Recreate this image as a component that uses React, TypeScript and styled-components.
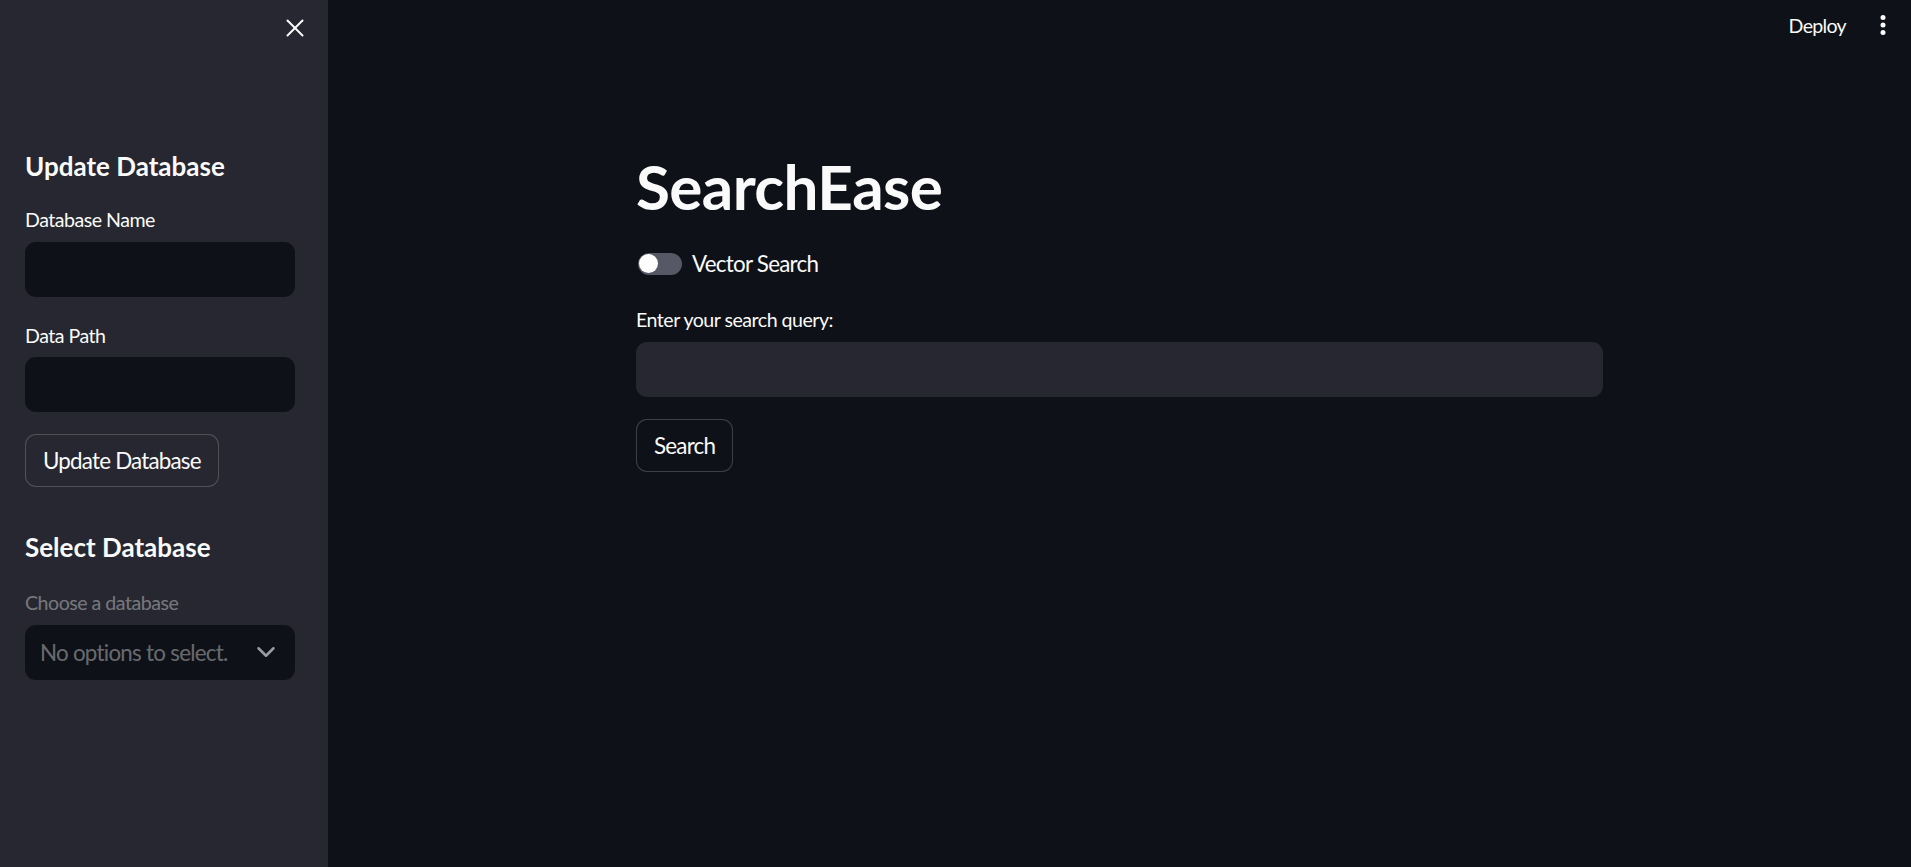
import React from 'react';
import styled, { createGlobalStyle } from 'styled-components';
import { X, ChevronDown } from 'lucide-react';

const GlobalStyle = createGlobalStyle`
  html, body {
    margin: 0;
    padding: 0;
    background: #0e1117;
    color: #fafafa;
    font-family: Lato, "Noto Sans", sans-serif;
  }
  * {
    box-sizing: border-box;
  }
`;

const Shell = styled.div`
  display: flex;
  flex-direction: row;
  width: 100%;
  height: 100vh;
  overflow: hidden;
`;

const Sidebar = styled.aside`
  width: 328px;
  flex-shrink: 0;
  height: 100%;
  background: #262730;
  display: flex;
  flex-direction: column;
  padding: 0 33px 0 25px;
`;

const SidebarTop = styled.div`
  height: 56px;
  display: flex;
  justify-content: flex-end;
  align-items: center;
  margin-right: -15px;
  color: #fafafa;
`;

const Heading = styled.h3<{ $top: number }>`
  margin: ${(p) => p.$top}px 0 0 0;
  font-size: 26px;
  line-height: 31px;
  font-weight: 700;
  color: #fafafa;
`;

const Label = styled.label<{ $top: number; $muted?: boolean }>`
  display: block;
  margin-top: ${(p) => p.$top}px;
  font-size: 19.6px;
  line-height: 23.5px;
  letter-spacing: -0.5px;
  color: ${(p) => (p.$muted ? 'rgba(250, 250, 250, 0.4)' : '#fafafa')};
`;

const Field = styled.div<{ $top: number; $bg: string }>`
  margin-top: ${(p) => p.$top}px;
  height: 55px;
  width: 100%;
  border-radius: 11px;
  background: ${(p) => p.$bg};
`;

const Button = styled.button<{ $top: number; $bg: string }>`
  margin-top: ${(p) => p.$top}px;
  align-self: flex-start;
  height: 53px;
  padding: 0 17px;
  border-radius: 11px;
  border: 1px solid rgba(250, 250, 250, 0.2);
  background: ${(p) => p.$bg};
  color: #fafafa;
  font-family: Lato, "Noto Sans", sans-serif;
  font-size: 22.4px;
  letter-spacing: -0.8px;
  cursor: pointer;
`;

const Select = styled.div`
  margin-top: 10px;
  height: 55px;
  width: 100%;
  border-radius: 11px;
  background: #0e1117;
  display: flex;
  align-items: center;
  justify-content: space-between;
  padding: 0 14px 0 15px;
  font-size: 22.4px;
  letter-spacing: -0.75px;
  color: rgba(250, 250, 250, 0.4);
  svg {
    color: rgba(250, 250, 250, 0.6);
  }
`;

const Main = styled.main`
  flex: 1;
  display: flex;
  flex-direction: column;
  height: 100%;
`;

const Header = styled.header`
  height: 50px;
  display: flex;
  justify-content: flex-end;
  align-items: center;
  gap: 32px;
  padding: 0 23px 0 0;
`;

const DeployText = styled.span`
  font-size: 19.6px;
  letter-spacing: -0.7px;
  color: #fafafa;
`;

const Content = styled.div`
  width: 967px;
  margin: 0 auto;
  display: flex;
  flex-direction: column;
`;

const Title = styled.h1`
  margin: 99px 0 0 0;
  font-size: 62px;
  line-height: 74px;
  font-weight: 700;
  letter-spacing: -0.6px;
  color: #fafafa;
`;

const ToggleRow = styled.div`
  margin-top: 27px;
  display: flex;
  align-items: center;
  gap: 10px;
  padding-left: 2px;
  font-size: 22.4px;
  letter-spacing: -0.75px;
`;

const Track = styled.div`
  width: 44px;
  height: 22px;
  border-radius: 11px;
  background: #565866;
  display: flex;
  align-items: center;
  padding-left: 1px;
`;

const Thumb = styled.div`
  width: 19px;
  height: 19px;
  border-radius: 50%;
  background: #ffffff;
`;

const Dots = () => (
  <svg width="10" height="24" viewBox="0 0 10 24" fill="#fafafa">
    <circle cx="5" cy="4.5" r="2.5" />
    <circle cx="5" cy="12" r="2.5" />
    <circle cx="5" cy="19.5" r="2.5" />
  </svg>
);

const App = () => (
  <>
    <GlobalStyle />
    <Shell>
      <Sidebar>
        <SidebarTop>
          <X size={30} strokeWidth={1.6} />
        </SidebarTop>
        <Heading $top={95}>Update Database</Heading>
        <Label $top={26}>Database Name</Label>
        <Field $top={10} $bg="#0e1117" />
        <Label $top={27}>Data Path</Label>
        <Field $top={10} $bg="#0e1117" />
        <Button $top={22} $bg="#262730">Update Database</Button>
        <Heading $top={45}>Select Database</Heading>
        <Label $top={28} $muted>Choose a database</Label>
        <Select>
          No options to select.
          <ChevronDown size={30} strokeWidth={2} />
        </Select>
      </Sidebar>
      <Main>
        <Header>
          <DeployText>Deploy</DeployText>
          <Dots />
        </Header>
        <Content>
          <Title>SearchEase</Title>
          <ToggleRow>
            <Track>
              <Thumb />
            </Track>
            Vector Search
          </ToggleRow>
          <Label $top={31}>Enter your search query:</Label>
          <Field $top={10} $bg="#262730" />
          <Button $top={22} $bg="#0e1117">Search</Button>
        </Content>
      </Main>
    </Shell>
  </>
);

export default App;
